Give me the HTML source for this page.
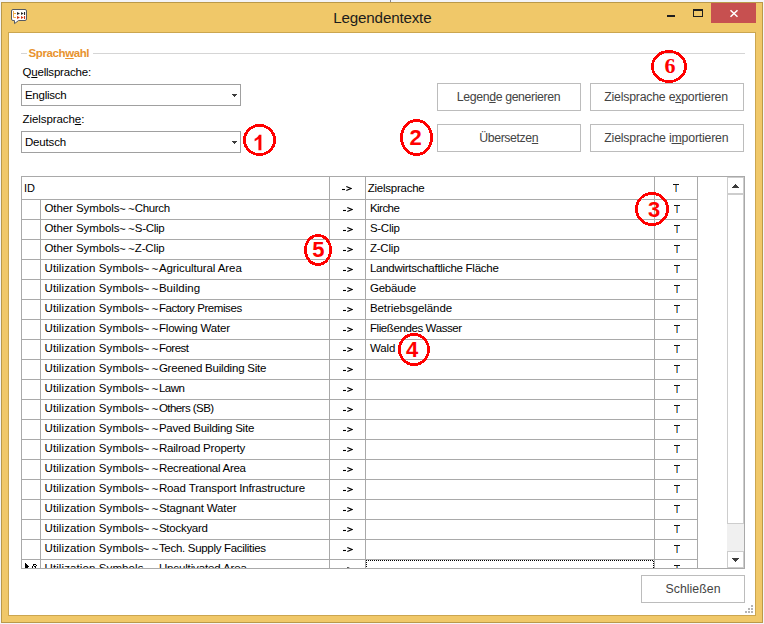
<!DOCTYPE html><html><head><meta charset="utf-8"><title>Legendentexte</title><style>

html,body{margin:0;padding:0}
body{width:764px;height:624px;position:relative;overflow:hidden;background:#f3f4f8;font-family:"Liberation Sans",sans-serif}
.a{position:absolute}
.t{position:absolute;white-space:pre;line-height:20px;height:20px}
.t u{text-decoration:underline;text-underline-offset:1px;text-decoration-thickness:1px}
.hl{position:absolute;height:1px;background:#a9a9a9}
.vl{position:absolute;width:1px;background:#a9a9a9}
.btn{position:absolute;box-sizing:border-box;border:1px solid #bcbcbc;background:#fff}
.cb{position:absolute;box-sizing:border-box;border:1px solid #a0a0a0;background:#fff}

</style></head><body>
<div class="a" style="left:390px;top:0;width:1px;height:2px;background:#85858c"></div>
<div class="a" style="left:1px;top:2px;width:762px;height:621px;box-sizing:border-box;border:1px solid #ba994a;background:#f0c869"></div>
<div class="a" style="left:8px;top:32px;width:748px;height:584px;box-sizing:border-box;border:1px solid #cba650;background:#fff"></div>
<div class="a" style="left:711px;top:3px;width:45px;height:20px;background:#c75050"></div>
<svg class="a" style="left:729px;top:9px" width="10" height="9" viewBox="0 0 10 9"><path d="M1.5 1.2 L8.5 7.8 M8.5 1.2 L1.5 7.8" stroke="#fff" stroke-width="1.55" fill="none"/></svg>
<div class="a" style="left:667px;top:15px;width:8px;height:2px;background:#1e1e1e"></div>
<div class="a" style="left:693px;top:9px;width:10px;height:8px;box-sizing:border-box;border:1px solid #1e1e1e;border-top-width:2px"></div>
<svg class="a" style="left:11px;top:9px" width="16" height="16" viewBox="0 0 16 16">
<path d="M2 0.5h12a1.5 1.5 0 0 1 1.5 1.5v8a1.5 1.5 0 0 1-1.5 1.5H7.6L3.5 14.6V11.5H2a1.5 1.5 0 0 1-1.5-1.5v-8A1.5 1.5 0 0 1 2 0.5z" fill="#fff" stroke="#555a63" stroke-width="1"/>
<path d="M2.5 2V8.5H5 M2.5 4.5H5" stroke="#efae4c" stroke-width="1" fill="none"/>
<path d="M6 3l3 1.5-3 1.5z M10 3l2.6 1.5-2.6 1.5z M13 3h1.1v3H13z" fill="#2b2b2b"/>
<path d="M6 7l3 1.5-3 1.5z M10 7l2.6 1.5-2.6 1.5z M13 7h1.1v3H13z" fill="#cf3416"/>
</svg>
<div class="hl" style="left:21px;top:53px;width:6px;background:#d5d5d5"></div>
<div class="hl" style="left:93px;top:53px;width:652px;background:#d5d5d5"></div>
<div class="cb" style="left:21px;top:84px;width:220px;height:22px"></div>
<svg class="a" style="left:232px;top:94px" width="5" height="3" viewBox="0 0 5 3" shape-rendering="crispEdges"><path d="M0 0h5v1h-1v1h-1v1h-1v-1h-1v-1h-1z" fill="#3c3c3c"/></svg>
<div class="cb" style="left:21px;top:131px;width:220px;height:22px"></div>
<svg class="a" style="left:232px;top:141px" width="5" height="3" viewBox="0 0 5 3" shape-rendering="crispEdges"><path d="M0 0h5v1h-1v1h-1v1h-1v-1h-1v-1h-1z" fill="#3c3c3c"/></svg>
<div class="btn" style="left:437px;top:83px;width:144px;height:28px"></div>
<div class="btn" style="left:590px;top:83px;width:154px;height:28px"></div>
<div class="btn" style="left:437px;top:124px;width:144px;height:28px"></div>
<div class="btn" style="left:590px;top:124px;width:154px;height:28px"></div>
<div class="btn" style="left:641px;top:575px;width:104px;height:28px"></div>
<div class="a" style="left:21px;top:176px;width:724px;height:393px;box-sizing:border-box;border:1px solid #a9a9a9;background:#fff;overflow:hidden"></div>
<div class="hl" style="left:22px;top:199px;width:676px"></div>
<div class="hl" style="left:22px;top:219px;width:676px"></div>
<div class="hl" style="left:22px;top:239px;width:676px"></div>
<div class="hl" style="left:22px;top:259px;width:676px"></div>
<div class="hl" style="left:22px;top:279px;width:676px"></div>
<div class="hl" style="left:22px;top:299px;width:676px"></div>
<div class="hl" style="left:22px;top:319px;width:676px"></div>
<div class="hl" style="left:22px;top:339px;width:676px"></div>
<div class="hl" style="left:22px;top:359px;width:676px"></div>
<div class="hl" style="left:22px;top:379px;width:676px"></div>
<div class="hl" style="left:22px;top:399px;width:676px"></div>
<div class="hl" style="left:22px;top:419px;width:676px"></div>
<div class="hl" style="left:22px;top:439px;width:676px"></div>
<div class="hl" style="left:22px;top:459px;width:676px"></div>
<div class="hl" style="left:22px;top:479px;width:676px"></div>
<div class="hl" style="left:22px;top:499px;width:676px"></div>
<div class="hl" style="left:22px;top:519px;width:676px"></div>
<div class="hl" style="left:22px;top:539px;width:676px"></div>
<div class="hl" style="left:22px;top:559px;width:676px"></div>
<div class="vl" style="left:40px;top:200px;height:368px"></div>
<div class="vl" style="left:329px;top:177px;height:391px"></div>
<div class="vl" style="left:365px;top:177px;height:391px"></div>
<div class="vl" style="left:654px;top:177px;height:391px"></div>
<div class="vl" style="left:697px;top:177px;height:391px"></div>
<div class="a" style="left:0;top:0;width:764px;height:568px;overflow:hidden">
<svg class="a" style="left:341px;top:185px" width="11" height="7" viewBox="0 0 11 7"><path d="M1 4.5H4" stroke="#000" stroke-width="1.1" fill="none"/><path d="M5.3 1.4L10 3.5L5.3 5.6" stroke="#000" stroke-width="1.05" fill="none"/></svg>
<svg class="a" style="left:342px;top:206px" width="11" height="7" viewBox="0 0 11 7"><path d="M1 4.5H4" stroke="#000" stroke-width="1.1" fill="none"/><path d="M5.3 1.4L10 3.5L5.3 5.6" stroke="#000" stroke-width="1.05" fill="none"/></svg>
<svg class="a" style="left:342px;top:226px" width="11" height="7" viewBox="0 0 11 7"><path d="M1 4.5H4" stroke="#000" stroke-width="1.1" fill="none"/><path d="M5.3 1.4L10 3.5L5.3 5.6" stroke="#000" stroke-width="1.05" fill="none"/></svg>
<svg class="a" style="left:342px;top:246px" width="11" height="7" viewBox="0 0 11 7"><path d="M1 4.5H4" stroke="#000" stroke-width="1.1" fill="none"/><path d="M5.3 1.4L10 3.5L5.3 5.6" stroke="#000" stroke-width="1.05" fill="none"/></svg>
<svg class="a" style="left:342px;top:266px" width="11" height="7" viewBox="0 0 11 7"><path d="M1 4.5H4" stroke="#000" stroke-width="1.1" fill="none"/><path d="M5.3 1.4L10 3.5L5.3 5.6" stroke="#000" stroke-width="1.05" fill="none"/></svg>
<svg class="a" style="left:342px;top:286px" width="11" height="7" viewBox="0 0 11 7"><path d="M1 4.5H4" stroke="#000" stroke-width="1.1" fill="none"/><path d="M5.3 1.4L10 3.5L5.3 5.6" stroke="#000" stroke-width="1.05" fill="none"/></svg>
<svg class="a" style="left:342px;top:306px" width="11" height="7" viewBox="0 0 11 7"><path d="M1 4.5H4" stroke="#000" stroke-width="1.1" fill="none"/><path d="M5.3 1.4L10 3.5L5.3 5.6" stroke="#000" stroke-width="1.05" fill="none"/></svg>
<svg class="a" style="left:342px;top:326px" width="11" height="7" viewBox="0 0 11 7"><path d="M1 4.5H4" stroke="#000" stroke-width="1.1" fill="none"/><path d="M5.3 1.4L10 3.5L5.3 5.6" stroke="#000" stroke-width="1.05" fill="none"/></svg>
<svg class="a" style="left:342px;top:346px" width="11" height="7" viewBox="0 0 11 7"><path d="M1 4.5H4" stroke="#000" stroke-width="1.1" fill="none"/><path d="M5.3 1.4L10 3.5L5.3 5.6" stroke="#000" stroke-width="1.05" fill="none"/></svg>
<svg class="a" style="left:342px;top:366px" width="11" height="7" viewBox="0 0 11 7"><path d="M1 4.5H4" stroke="#000" stroke-width="1.1" fill="none"/><path d="M5.3 1.4L10 3.5L5.3 5.6" stroke="#000" stroke-width="1.05" fill="none"/></svg>
<svg class="a" style="left:342px;top:386px" width="11" height="7" viewBox="0 0 11 7"><path d="M1 4.5H4" stroke="#000" stroke-width="1.1" fill="none"/><path d="M5.3 1.4L10 3.5L5.3 5.6" stroke="#000" stroke-width="1.05" fill="none"/></svg>
<svg class="a" style="left:342px;top:406px" width="11" height="7" viewBox="0 0 11 7"><path d="M1 4.5H4" stroke="#000" stroke-width="1.1" fill="none"/><path d="M5.3 1.4L10 3.5L5.3 5.6" stroke="#000" stroke-width="1.05" fill="none"/></svg>
<svg class="a" style="left:342px;top:426px" width="11" height="7" viewBox="0 0 11 7"><path d="M1 4.5H4" stroke="#000" stroke-width="1.1" fill="none"/><path d="M5.3 1.4L10 3.5L5.3 5.6" stroke="#000" stroke-width="1.05" fill="none"/></svg>
<svg class="a" style="left:342px;top:446px" width="11" height="7" viewBox="0 0 11 7"><path d="M1 4.5H4" stroke="#000" stroke-width="1.1" fill="none"/><path d="M5.3 1.4L10 3.5L5.3 5.6" stroke="#000" stroke-width="1.05" fill="none"/></svg>
<svg class="a" style="left:342px;top:466px" width="11" height="7" viewBox="0 0 11 7"><path d="M1 4.5H4" stroke="#000" stroke-width="1.1" fill="none"/><path d="M5.3 1.4L10 3.5L5.3 5.6" stroke="#000" stroke-width="1.05" fill="none"/></svg>
<svg class="a" style="left:342px;top:486px" width="11" height="7" viewBox="0 0 11 7"><path d="M1 4.5H4" stroke="#000" stroke-width="1.1" fill="none"/><path d="M5.3 1.4L10 3.5L5.3 5.6" stroke="#000" stroke-width="1.05" fill="none"/></svg>
<svg class="a" style="left:342px;top:506px" width="11" height="7" viewBox="0 0 11 7"><path d="M1 4.5H4" stroke="#000" stroke-width="1.1" fill="none"/><path d="M5.3 1.4L10 3.5L5.3 5.6" stroke="#000" stroke-width="1.05" fill="none"/></svg>
<svg class="a" style="left:342px;top:526px" width="11" height="7" viewBox="0 0 11 7"><path d="M1 4.5H4" stroke="#000" stroke-width="1.1" fill="none"/><path d="M5.3 1.4L10 3.5L5.3 5.6" stroke="#000" stroke-width="1.05" fill="none"/></svg>
<svg class="a" style="left:342px;top:546px" width="11" height="7" viewBox="0 0 11 7"><path d="M1 4.5H4" stroke="#000" stroke-width="1.1" fill="none"/><path d="M5.3 1.4L10 3.5L5.3 5.6" stroke="#000" stroke-width="1.05" fill="none"/></svg>
<svg class="a" style="left:342px;top:566px" width="11" height="7" viewBox="0 0 11 7"><path d="M1 4.5H4" stroke="#000" stroke-width="1.1" fill="none"/><path d="M5.3 1.4L10 3.5L5.3 5.6" stroke="#000" stroke-width="1.05" fill="none"/></svg>
<div class="a" style="left:673px;top:184px;width:6px;height:8px"><div class="a" style="left:0;top:0;width:6px;height:1px;background:#151515"></div><div class="a" style="left:2px;top:1px;width:1px;height:7px;background:#d9994a"></div><div class="a" style="left:3px;top:1px;width:1px;height:7px;background:#3f8fe0"></div></div>
<div class="a" style="left:674px;top:205px;width:6px;height:8px"><div class="a" style="left:0;top:0;width:6px;height:1px;background:#151515"></div><div class="a" style="left:2px;top:1px;width:1px;height:7px;background:#d9994a"></div><div class="a" style="left:3px;top:1px;width:1px;height:7px;background:#3f8fe0"></div></div>
<div class="a" style="left:674px;top:225px;width:6px;height:8px"><div class="a" style="left:0;top:0;width:6px;height:1px;background:#151515"></div><div class="a" style="left:2px;top:1px;width:1px;height:7px;background:#d9994a"></div><div class="a" style="left:3px;top:1px;width:1px;height:7px;background:#3f8fe0"></div></div>
<div class="a" style="left:674px;top:245px;width:6px;height:8px"><div class="a" style="left:0;top:0;width:6px;height:1px;background:#151515"></div><div class="a" style="left:2px;top:1px;width:1px;height:7px;background:#d9994a"></div><div class="a" style="left:3px;top:1px;width:1px;height:7px;background:#3f8fe0"></div></div>
<div class="a" style="left:674px;top:265px;width:6px;height:8px"><div class="a" style="left:0;top:0;width:6px;height:1px;background:#151515"></div><div class="a" style="left:2px;top:1px;width:1px;height:7px;background:#d9994a"></div><div class="a" style="left:3px;top:1px;width:1px;height:7px;background:#3f8fe0"></div></div>
<div class="a" style="left:674px;top:285px;width:6px;height:8px"><div class="a" style="left:0;top:0;width:6px;height:1px;background:#151515"></div><div class="a" style="left:2px;top:1px;width:1px;height:7px;background:#d9994a"></div><div class="a" style="left:3px;top:1px;width:1px;height:7px;background:#3f8fe0"></div></div>
<div class="a" style="left:674px;top:305px;width:6px;height:8px"><div class="a" style="left:0;top:0;width:6px;height:1px;background:#151515"></div><div class="a" style="left:2px;top:1px;width:1px;height:7px;background:#d9994a"></div><div class="a" style="left:3px;top:1px;width:1px;height:7px;background:#3f8fe0"></div></div>
<div class="a" style="left:674px;top:325px;width:6px;height:8px"><div class="a" style="left:0;top:0;width:6px;height:1px;background:#151515"></div><div class="a" style="left:2px;top:1px;width:1px;height:7px;background:#d9994a"></div><div class="a" style="left:3px;top:1px;width:1px;height:7px;background:#3f8fe0"></div></div>
<div class="a" style="left:674px;top:345px;width:6px;height:8px"><div class="a" style="left:0;top:0;width:6px;height:1px;background:#151515"></div><div class="a" style="left:2px;top:1px;width:1px;height:7px;background:#d9994a"></div><div class="a" style="left:3px;top:1px;width:1px;height:7px;background:#3f8fe0"></div></div>
<div class="a" style="left:674px;top:365px;width:6px;height:8px"><div class="a" style="left:0;top:0;width:6px;height:1px;background:#151515"></div><div class="a" style="left:2px;top:1px;width:1px;height:7px;background:#d9994a"></div><div class="a" style="left:3px;top:1px;width:1px;height:7px;background:#3f8fe0"></div></div>
<div class="a" style="left:674px;top:385px;width:6px;height:8px"><div class="a" style="left:0;top:0;width:6px;height:1px;background:#151515"></div><div class="a" style="left:2px;top:1px;width:1px;height:7px;background:#d9994a"></div><div class="a" style="left:3px;top:1px;width:1px;height:7px;background:#3f8fe0"></div></div>
<div class="a" style="left:674px;top:405px;width:6px;height:8px"><div class="a" style="left:0;top:0;width:6px;height:1px;background:#151515"></div><div class="a" style="left:2px;top:1px;width:1px;height:7px;background:#d9994a"></div><div class="a" style="left:3px;top:1px;width:1px;height:7px;background:#3f8fe0"></div></div>
<div class="a" style="left:674px;top:425px;width:6px;height:8px"><div class="a" style="left:0;top:0;width:6px;height:1px;background:#151515"></div><div class="a" style="left:2px;top:1px;width:1px;height:7px;background:#d9994a"></div><div class="a" style="left:3px;top:1px;width:1px;height:7px;background:#3f8fe0"></div></div>
<div class="a" style="left:674px;top:445px;width:6px;height:8px"><div class="a" style="left:0;top:0;width:6px;height:1px;background:#151515"></div><div class="a" style="left:2px;top:1px;width:1px;height:7px;background:#d9994a"></div><div class="a" style="left:3px;top:1px;width:1px;height:7px;background:#3f8fe0"></div></div>
<div class="a" style="left:674px;top:465px;width:6px;height:8px"><div class="a" style="left:0;top:0;width:6px;height:1px;background:#151515"></div><div class="a" style="left:2px;top:1px;width:1px;height:7px;background:#d9994a"></div><div class="a" style="left:3px;top:1px;width:1px;height:7px;background:#3f8fe0"></div></div>
<div class="a" style="left:674px;top:485px;width:6px;height:8px"><div class="a" style="left:0;top:0;width:6px;height:1px;background:#151515"></div><div class="a" style="left:2px;top:1px;width:1px;height:7px;background:#d9994a"></div><div class="a" style="left:3px;top:1px;width:1px;height:7px;background:#3f8fe0"></div></div>
<div class="a" style="left:674px;top:505px;width:6px;height:8px"><div class="a" style="left:0;top:0;width:6px;height:1px;background:#151515"></div><div class="a" style="left:2px;top:1px;width:1px;height:7px;background:#d9994a"></div><div class="a" style="left:3px;top:1px;width:1px;height:7px;background:#3f8fe0"></div></div>
<div class="a" style="left:674px;top:525px;width:6px;height:8px"><div class="a" style="left:0;top:0;width:6px;height:1px;background:#151515"></div><div class="a" style="left:2px;top:1px;width:1px;height:7px;background:#d9994a"></div><div class="a" style="left:3px;top:1px;width:1px;height:7px;background:#3f8fe0"></div></div>
<div class="a" style="left:674px;top:545px;width:6px;height:8px"><div class="a" style="left:0;top:0;width:6px;height:1px;background:#151515"></div><div class="a" style="left:2px;top:1px;width:1px;height:7px;background:#d9994a"></div><div class="a" style="left:3px;top:1px;width:1px;height:7px;background:#3f8fe0"></div></div>
<div class="a" style="left:674px;top:565px;width:6px;height:8px"><div class="a" style="left:0;top:0;width:6px;height:1px;background:#151515"></div><div class="a" style="left:2px;top:1px;width:1px;height:7px;background:#d9994a"></div><div class="a" style="left:3px;top:1px;width:1px;height:7px;background:#3f8fe0"></div></div>
</div>
<svg class="a" style="left:0;top:0" width="60" height="568" viewBox="0 0 60 568" shape-rendering="crispEdges" fill="#000"><rect x="25" y="563" width="1" height="1"/><rect x="25" y="564" width="1" height="1"/><rect x="26" y="564" width="1" height="1"/><rect x="25" y="565" width="1" height="1"/><rect x="26" y="565" width="1" height="1"/><rect x="27" y="565" width="1" height="1"/><rect x="25" y="566" width="1" height="1"/><rect x="26" y="566" width="1" height="1"/><rect x="27" y="566" width="1" height="1"/><rect x="28" y="566" width="1" height="1"/><rect x="25" y="567" width="1" height="1"/><rect x="26" y="567" width="1" height="1"/><rect x="27" y="567" width="1" height="1"/><rect x="33" y="564" width="1" height="1"/><rect x="34" y="564" width="1" height="1"/><rect x="35" y="564" width="1" height="1"/><rect x="33" y="565" width="1" height="1"/><rect x="36" y="565" width="1" height="1"/><rect x="32" y="566" width="1" height="1"/><rect x="34" y="566" width="1" height="1"/><rect x="35" y="566" width="1" height="1"/><rect x="32" y="567" width="1" height="1"/><rect x="35" y="567" width="1" height="1"/></svg>
<div class="a" style="left:366px;top:560px;width:287px;height:1px;background:repeating-linear-gradient(90deg,#000 0,#000 1px,transparent 1px,transparent 2px)"></div>
<div class="a" style="left:366px;top:560px;width:1px;height:8px;background:repeating-linear-gradient(180deg,#000 0,#000 1px,transparent 1px,transparent 2px)"></div>
<div class="a" style="left:653px;top:561px;width:1px;height:7px;background:repeating-linear-gradient(180deg,#000 0,#000 1px,transparent 1px,transparent 2px)"></div>
<div class="a" style="left:727px;top:177px;width:17px;height:391px;background:#f0f0f0"></div>
<div class="a" style="left:727px;top:177px;width:17px;height:17px;box-sizing:border-box;border:1px solid #cdcdcd;background:#fff"></div>
<div class="a" style="left:727px;top:194px;width:17px;height:330px;box-sizing:border-box;border:1px solid #cdcdcd;background:#fff"></div>
<div class="a" style="left:727px;top:551px;width:17px;height:17px;box-sizing:border-box;border:1px solid #cdcdcd;background:#fff"></div>
<svg class="a" style="left:732px;top:184px" width="7" height="4" viewBox="0 0 7 4" shape-rendering="crispEdges"><path d="M3 0h1v1h1v1h1v1h1v1h-7v-1h1v-1h1v-1h1z" fill="#3c3c3c"/></svg>
<svg class="a" style="left:732px;top:558px" width="7" height="4" viewBox="0 0 7 4" shape-rendering="crispEdges"><path d="M0 0h7v1h-1v1h-1v1h-1v1h-1v-1h-1v-1h-1v-1h-1z" fill="#3c3c3c"/></svg>
<div class="a" style="left:751px;top:605px;width:2px;height:2px;background:#b4b4b4"></div>
<div class="a" style="left:748px;top:608px;width:2px;height:2px;background:#b4b4b4"></div>
<div class="a" style="left:751px;top:608px;width:2px;height:2px;background:#b4b4b4"></div>
<div class="a" style="left:745px;top:611px;width:2px;height:2px;background:#b4b4b4"></div>
<div class="a" style="left:748px;top:611px;width:2px;height:2px;background:#b4b4b4"></div>
<div class="a" style="left:751px;top:611px;width:2px;height:2px;background:#b4b4b4"></div>
<div class="a" style="left:0;top:0;width:764px;height:568px;overflow:hidden">
<div class="t" style='left:23.90px;top:178.19px;font-size:11px;font-weight:normal;color:#000;letter-spacing:0.000px;font-family:"Liberation Sans", sans-serif'>ID</div>
<div class="t" style='left:367.70px;top:178.02px;font-size:11.5px;font-weight:normal;color:#000;letter-spacing:-0.245px;font-family:"Liberation Sans", sans-serif'>Zielsprache</div>
<div class="t" style='left:44.50px;top:198.02px;font-size:11.5px;font-weight:normal;color:#000;letter-spacing:-0.089px;font-family:"Liberation Sans", sans-serif'>Other Symbols</div>
<div class="t" style='left:118.90px;top:199.02px;font-size:11.5px;font-weight:normal;color:#000;letter-spacing:2.462px;font-family:"Liberation Sans", sans-serif'>~~</div>
<div class="t" style='left:134.80px;top:198.02px;font-size:11.5px;font-weight:normal;color:#000;letter-spacing:-0.356px;font-family:"Liberation Sans", sans-serif'>Church</div>
<div class="t" style='left:369.90px;top:198.02px;font-size:11.5px;font-weight:normal;color:#000;letter-spacing:-0.522px;font-family:"Liberation Sans", sans-serif'>Kirche</div>
<div class="t" style='left:44.50px;top:218.02px;font-size:11.5px;font-weight:normal;color:#000;letter-spacing:-0.089px;font-family:"Liberation Sans", sans-serif'>Other Symbols</div>
<div class="t" style='left:118.90px;top:219.02px;font-size:11.5px;font-weight:normal;color:#000;letter-spacing:2.462px;font-family:"Liberation Sans", sans-serif'>~~</div>
<div class="t" style='left:134.80px;top:218.02px;font-size:11.5px;font-weight:normal;color:#000;letter-spacing:-0.283px;font-family:"Liberation Sans", sans-serif'>S-Clip</div>
<div class="t" style='left:369.90px;top:218.02px;font-size:11.5px;font-weight:normal;color:#000;letter-spacing:-0.263px;font-family:"Liberation Sans", sans-serif'>S-Clip</div>
<div class="t" style='left:44.50px;top:238.02px;font-size:11.5px;font-weight:normal;color:#000;letter-spacing:-0.089px;font-family:"Liberation Sans", sans-serif'>Other Symbols</div>
<div class="t" style='left:118.90px;top:239.02px;font-size:11.5px;font-weight:normal;color:#000;letter-spacing:2.462px;font-family:"Liberation Sans", sans-serif'>~~</div>
<div class="t" style='left:134.80px;top:238.02px;font-size:11.5px;font-weight:normal;color:#000;letter-spacing:-0.154px;font-family:"Liberation Sans", sans-serif'>Z-Clip</div>
<div class="t" style='left:369.90px;top:238.02px;font-size:11.5px;font-weight:normal;color:#000;letter-spacing:-0.194px;font-family:"Liberation Sans", sans-serif'>Z-Clip</div>
<div class="t" style='left:44.50px;top:258.02px;font-size:11.5px;font-weight:normal;color:#000;letter-spacing:0.102px;font-family:"Liberation Sans", sans-serif'>Utilization Symbols</div>
<div class="t" style='left:142.50px;top:259.02px;font-size:11.5px;font-weight:normal;color:#000;letter-spacing:2.263px;font-family:"Liberation Sans", sans-serif'>~~</div>
<div class="t" style='left:158.90px;top:258.02px;font-size:11.5px;font-weight:normal;color:#000;letter-spacing:-0.092px;font-family:"Liberation Sans", sans-serif'>Agricultural Area</div>
<div class="t" style='left:369.90px;top:258.02px;font-size:11.5px;font-weight:normal;color:#000;letter-spacing:-0.265px;font-family:"Liberation Sans", sans-serif'>Landwirtschaftliche Fläche</div>
<div class="t" style='left:44.50px;top:278.02px;font-size:11.5px;font-weight:normal;color:#000;letter-spacing:0.102px;font-family:"Liberation Sans", sans-serif'>Utilization Symbols</div>
<div class="t" style='left:142.50px;top:279.02px;font-size:11.5px;font-weight:normal;color:#000;letter-spacing:2.263px;font-family:"Liberation Sans", sans-serif'>~~</div>
<div class="t" style='left:158.90px;top:278.02px;font-size:11.5px;font-weight:normal;color:#000;letter-spacing:0.040px;font-family:"Liberation Sans", sans-serif'>Building</div>
<div class="t" style='left:369.90px;top:278.02px;font-size:11.5px;font-weight:normal;color:#000;letter-spacing:-0.188px;font-family:"Liberation Sans", sans-serif'>Gebäude</div>
<div class="t" style='left:44.50px;top:298.02px;font-size:11.5px;font-weight:normal;color:#000;letter-spacing:0.102px;font-family:"Liberation Sans", sans-serif'>Utilization Symbols</div>
<div class="t" style='left:142.50px;top:299.02px;font-size:11.5px;font-weight:normal;color:#000;letter-spacing:2.263px;font-family:"Liberation Sans", sans-serif'>~~</div>
<div class="t" style='left:158.90px;top:298.02px;font-size:11.5px;font-weight:normal;color:#000;letter-spacing:-0.411px;font-family:"Liberation Sans", sans-serif'>Factory Premises</div>
<div class="t" style='left:369.90px;top:298.02px;font-size:11.5px;font-weight:normal;color:#000;letter-spacing:-0.059px;font-family:"Liberation Sans", sans-serif'>Betriebsgelände</div>
<div class="t" style='left:44.50px;top:318.02px;font-size:11.5px;font-weight:normal;color:#000;letter-spacing:0.102px;font-family:"Liberation Sans", sans-serif'>Utilization Symbols</div>
<div class="t" style='left:142.50px;top:319.02px;font-size:11.5px;font-weight:normal;color:#000;letter-spacing:2.263px;font-family:"Liberation Sans", sans-serif'>~~</div>
<div class="t" style='left:158.90px;top:318.02px;font-size:11.5px;font-weight:normal;color:#000;letter-spacing:-0.165px;font-family:"Liberation Sans", sans-serif'>Flowing Water</div>
<div class="t" style='left:369.90px;top:318.02px;font-size:11.5px;font-weight:normal;color:#000;letter-spacing:-0.396px;font-family:"Liberation Sans", sans-serif'>Fließendes Wasser</div>
<div class="t" style='left:44.50px;top:338.02px;font-size:11.5px;font-weight:normal;color:#000;letter-spacing:0.102px;font-family:"Liberation Sans", sans-serif'>Utilization Symbols</div>
<div class="t" style='left:142.50px;top:339.02px;font-size:11.5px;font-weight:normal;color:#000;letter-spacing:2.263px;font-family:"Liberation Sans", sans-serif'>~~</div>
<div class="t" style='left:158.90px;top:338.02px;font-size:11.5px;font-weight:normal;color:#000;letter-spacing:-0.499px;font-family:"Liberation Sans", sans-serif'>Forest</div>
<div class="t" style='left:369.90px;top:338.02px;font-size:11.5px;font-weight:normal;color:#000;letter-spacing:-0.094px;font-family:"Liberation Sans", sans-serif'>Wald</div>
<div class="t" style='left:44.50px;top:358.02px;font-size:11.5px;font-weight:normal;color:#000;letter-spacing:0.102px;font-family:"Liberation Sans", sans-serif'>Utilization Symbols</div>
<div class="t" style='left:142.50px;top:359.02px;font-size:11.5px;font-weight:normal;color:#000;letter-spacing:2.263px;font-family:"Liberation Sans", sans-serif'>~~</div>
<div class="t" style='left:158.90px;top:358.02px;font-size:11.5px;font-weight:normal;color:#000;letter-spacing:-0.215px;font-family:"Liberation Sans", sans-serif'>Greened Building Site</div>
<div class="t" style='left:44.50px;top:378.02px;font-size:11.5px;font-weight:normal;color:#000;letter-spacing:0.102px;font-family:"Liberation Sans", sans-serif'>Utilization Symbols</div>
<div class="t" style='left:142.50px;top:379.02px;font-size:11.5px;font-weight:normal;color:#000;letter-spacing:2.263px;font-family:"Liberation Sans", sans-serif'>~~</div>
<div class="t" style='left:158.90px;top:378.02px;font-size:11.5px;font-weight:normal;color:#000;letter-spacing:-0.500px;font-family:"Liberation Sans", sans-serif'>Lawn</div>
<div class="t" style='left:44.50px;top:398.02px;font-size:11.5px;font-weight:normal;color:#000;letter-spacing:0.102px;font-family:"Liberation Sans", sans-serif'>Utilization Symbols</div>
<div class="t" style='left:142.50px;top:399.02px;font-size:11.5px;font-weight:normal;color:#000;letter-spacing:2.263px;font-family:"Liberation Sans", sans-serif'>~~</div>
<div class="t" style='left:158.90px;top:398.02px;font-size:11.5px;font-weight:normal;color:#000;letter-spacing:-0.552px;font-family:"Liberation Sans", sans-serif'>Others (SB)</div>
<div class="t" style='left:44.50px;top:418.02px;font-size:11.5px;font-weight:normal;color:#000;letter-spacing:0.102px;font-family:"Liberation Sans", sans-serif'>Utilization Symbols</div>
<div class="t" style='left:142.50px;top:419.02px;font-size:11.5px;font-weight:normal;color:#000;letter-spacing:2.263px;font-family:"Liberation Sans", sans-serif'>~~</div>
<div class="t" style='left:158.90px;top:418.02px;font-size:11.5px;font-weight:normal;color:#000;letter-spacing:-0.241px;font-family:"Liberation Sans", sans-serif'>Paved Building Site</div>
<div class="t" style='left:44.50px;top:438.02px;font-size:11.5px;font-weight:normal;color:#000;letter-spacing:0.102px;font-family:"Liberation Sans", sans-serif'>Utilization Symbols</div>
<div class="t" style='left:142.50px;top:439.02px;font-size:11.5px;font-weight:normal;color:#000;letter-spacing:2.263px;font-family:"Liberation Sans", sans-serif'>~~</div>
<div class="t" style='left:158.90px;top:438.02px;font-size:11.5px;font-weight:normal;color:#000;letter-spacing:-0.199px;font-family:"Liberation Sans", sans-serif'>Railroad Property</div>
<div class="t" style='left:44.50px;top:458.02px;font-size:11.5px;font-weight:normal;color:#000;letter-spacing:0.102px;font-family:"Liberation Sans", sans-serif'>Utilization Symbols</div>
<div class="t" style='left:142.50px;top:459.02px;font-size:11.5px;font-weight:normal;color:#000;letter-spacing:2.263px;font-family:"Liberation Sans", sans-serif'>~~</div>
<div class="t" style='left:158.90px;top:458.02px;font-size:11.5px;font-weight:normal;color:#000;letter-spacing:-0.270px;font-family:"Liberation Sans", sans-serif'>Recreational Area</div>
<div class="t" style='left:44.50px;top:478.02px;font-size:11.5px;font-weight:normal;color:#000;letter-spacing:0.102px;font-family:"Liberation Sans", sans-serif'>Utilization Symbols</div>
<div class="t" style='left:142.50px;top:479.02px;font-size:11.5px;font-weight:normal;color:#000;letter-spacing:2.263px;font-family:"Liberation Sans", sans-serif'>~~</div>
<div class="t" style='left:158.90px;top:478.02px;font-size:11.5px;font-weight:normal;color:#000;letter-spacing:-0.140px;font-family:"Liberation Sans", sans-serif'>Road Transport Infrastructure</div>
<div class="t" style='left:44.50px;top:498.02px;font-size:11.5px;font-weight:normal;color:#000;letter-spacing:0.102px;font-family:"Liberation Sans", sans-serif'>Utilization Symbols</div>
<div class="t" style='left:142.50px;top:499.02px;font-size:11.5px;font-weight:normal;color:#000;letter-spacing:2.263px;font-family:"Liberation Sans", sans-serif'>~~</div>
<div class="t" style='left:158.90px;top:498.02px;font-size:11.5px;font-weight:normal;color:#000;letter-spacing:-0.145px;font-family:"Liberation Sans", sans-serif'>Stagnant Water</div>
<div class="t" style='left:44.50px;top:518.02px;font-size:11.5px;font-weight:normal;color:#000;letter-spacing:0.102px;font-family:"Liberation Sans", sans-serif'>Utilization Symbols</div>
<div class="t" style='left:142.50px;top:519.02px;font-size:11.5px;font-weight:normal;color:#000;letter-spacing:2.263px;font-family:"Liberation Sans", sans-serif'>~~</div>
<div class="t" style='left:158.90px;top:518.02px;font-size:11.5px;font-weight:normal;color:#000;letter-spacing:-0.255px;font-family:"Liberation Sans", sans-serif'>Stockyard</div>
<div class="t" style='left:44.50px;top:538.02px;font-size:11.5px;font-weight:normal;color:#000;letter-spacing:0.102px;font-family:"Liberation Sans", sans-serif'>Utilization Symbols</div>
<div class="t" style='left:142.50px;top:539.02px;font-size:11.5px;font-weight:normal;color:#000;letter-spacing:2.263px;font-family:"Liberation Sans", sans-serif'>~~</div>
<div class="t" style='left:158.90px;top:538.02px;font-size:11.5px;font-weight:normal;color:#000;letter-spacing:-0.299px;font-family:"Liberation Sans", sans-serif'>Tech. Supply Facilities</div>
<div class="t" style='left:44.50px;top:558.02px;font-size:11.5px;font-weight:normal;color:#000;letter-spacing:0.102px;font-family:"Liberation Sans", sans-serif'>Utilization Symbols</div>
<div class="t" style='left:142.50px;top:559.02px;font-size:11.5px;font-weight:normal;color:#000;letter-spacing:2.263px;font-family:"Liberation Sans", sans-serif'>~~</div>
<div class="t" style='left:158.90px;top:558.02px;font-size:11.5px;font-weight:normal;color:#000;letter-spacing:-0.140px;font-family:"Liberation Sans", sans-serif'>Uncultivated Area</div>
</div>
<div class="t" style='left:333.30px;top:7.73px;font-size:15.2px;font-weight:normal;color:#1c1c1c;letter-spacing:-0.183px;font-family:"Liberation Sans", sans-serif'>Legendentexte</div>
<div class="t" style='left:28.60px;top:43.02px;font-size:11.5px;font-weight:bold;color:#E8932F;letter-spacing:-0.407px;font-family:"Liberation Sans", sans-serif'>Sprach<u>w</u>ahl</div>
<div class="t" style='left:22.50px;top:62.02px;font-size:11.5px;font-weight:normal;color:#000;letter-spacing:-0.197px;font-family:"Liberation Sans", sans-serif'>Q<u>u</u>ellsprache:</div>
<div class="t" style='left:24.90px;top:85.02px;font-size:11.5px;font-weight:normal;color:#000;letter-spacing:-0.238px;font-family:"Liberation Sans", sans-serif'>Englisch</div>
<div class="t" style='left:22.50px;top:109.02px;font-size:11.5px;font-weight:normal;color:#000;letter-spacing:-0.076px;font-family:"Liberation Sans", sans-serif'>Zielsprach<u>e</u>:</div>
<div class="t" style='left:24.90px;top:132.02px;font-size:11.5px;font-weight:normal;color:#000;letter-spacing:-0.148px;font-family:"Liberation Sans", sans-serif'>Deutsch</div>
<div class="t" style='left:456.80px;top:86.74px;font-size:12.3px;font-weight:normal;color:#444;letter-spacing:-0.370px;font-family:"Liberation Sans", sans-serif'>Legen<u>d</u>e generieren</div>
<div class="t" style='left:479.30px;top:127.74px;font-size:12.3px;font-weight:normal;color:#444;letter-spacing:-0.399px;font-family:"Liberation Sans", sans-serif'>Übersetze<u>n</u></div>
<div class="t" style='left:604.30px;top:86.74px;font-size:12.3px;font-weight:normal;color:#444;letter-spacing:-0.218px;font-family:"Liberation Sans", sans-serif'>Zielsprache e<u>x</u>portieren</div>
<div class="t" style='left:604.30px;top:127.74px;font-size:12.3px;font-weight:normal;color:#444;letter-spacing:-0.191px;font-family:"Liberation Sans", sans-serif'>Zielsprache i<u>m</u>portieren</div>
<div class="t" style='left:665.50px;top:578.74px;font-size:12.3px;font-weight:normal;color:#444;letter-spacing:0.039px;font-family:"Liberation Sans", sans-serif'>Schließen</div>
<svg class="a" style="left:242.0px;top:123.0px" width="35" height="34" viewBox="0 0 35 34" shape-rendering="crispEdges"><ellipse cx="17.5" cy="17.0" rx="15.1" ry="14.6" fill="none" stroke="#f00" stroke-width="2.8"/></svg>
<svg class="a" style="left:0;top:0;overflow:visible" width="1" height="1"><path transform="translate(253.12,150.24) scale(0.01025,-0.01025)" d="M806 0H518V1085Q360 938 146 867V1128Q259 1165 391 1268Q523 1372 572 1510H806Z" fill="#f00"/></svg>
<svg class="a" style="left:399.0px;top:118.0px" width="35" height="39" viewBox="0 0 35 39" shape-rendering="crispEdges"><ellipse cx="17.5" cy="19.5" rx="15.1" ry="17.1" fill="none" stroke="#f00" stroke-width="2.8"/></svg>
<div class="a" style='left:395.5px;top:118.0px;width:40px;height:40px;line-height:40px;text-align:center;font-family:"Liberation Sans", sans-serif;font-weight:bold;font-size:22px;color:#f00'><span style="position:relative;top:0px">2</span></div>
<svg class="a" style="left:634.0px;top:191.0px" width="36" height="36" viewBox="0 0 36 36" shape-rendering="crispEdges"><ellipse cx="18.0" cy="18.0" rx="15.6" ry="15.6" fill="none" stroke="#f00" stroke-width="2.8"/></svg>
<div class="a" style='left:634.0px;top:190.0px;width:40px;height:40px;line-height:40px;text-align:center;font-family:"Liberation Sans", sans-serif;font-weight:bold;font-size:22px;color:#f00'><span style="position:relative;top:0px">3</span></div>
<svg class="a" style="left:397.0px;top:332.0px" width="34" height="35" viewBox="0 0 34 35" shape-rendering="crispEdges"><ellipse cx="17.0" cy="17.5" rx="14.6" ry="15.1" fill="none" stroke="#f00" stroke-width="2.8"/></svg>
<div class="a" style='left:392.0px;top:330.0px;width:40px;height:40px;line-height:40px;text-align:center;font-family:"Liberation Sans", sans-serif;font-weight:bold;font-size:22px;color:#f00'><span style="position:relative;top:0px">4</span></div>
<svg class="a" style="left:303.0px;top:233.0px" width="30" height="34" viewBox="0 0 30 34" shape-rendering="crispEdges"><ellipse cx="15.0" cy="17.0" rx="12.6" ry="14.6" fill="none" stroke="#f00" stroke-width="2.8"/></svg>
<div class="a" style='left:298.3px;top:230.3px;width:40px;height:40px;line-height:40px;text-align:center;font-family:"Liberation Sans", sans-serif;font-weight:bold;font-size:22px;color:#f00'><span style="position:relative;top:0px">5</span></div>
<svg class="a" style="left:650.0px;top:49.0px" width="38" height="35" viewBox="0 0 38 35" shape-rendering="crispEdges"><ellipse cx="19.0" cy="17.5" rx="16.6" ry="15.1" fill="none" stroke="#f00" stroke-width="2.8"/></svg>
<div class="a" style='left:650.0px;top:45.6px;width:40px;height:40px;line-height:40px;text-align:center;font-family:"Liberation Serif", serif;font-weight:bold;font-size:22px;color:#f00'><span style="position:relative;top:0px">6</span></div>
</body></html>
